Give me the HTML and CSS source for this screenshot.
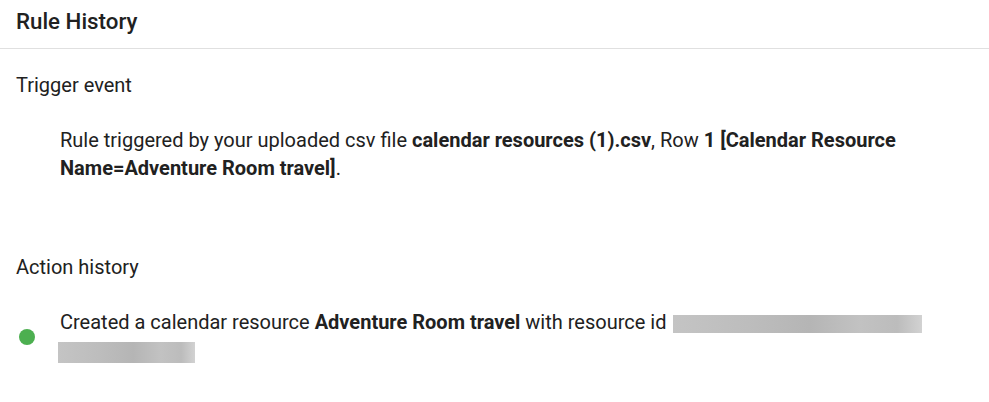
FILE: index.html
```html
<!DOCTYPE html>
<html>
<head>
<meta charset="utf-8">
<link rel="stylesheet" href="styles.css">
</head>
<body>
<div class="panel">
  <div class="header"><h1 class="title">Rule History</h1></div>
  <section class="section trigger">
    <div class="label">Trigger event</div>
    <p class="desc">Rule triggered by your uploaded csv file <b>calendar resources (1).csv</b>, Row <b>1 [Calendar Resource Name=Adventure Room travel]</b>.</p>
  </section>
  <section class="section action">
    <div class="label">Action history</div>
    <div class="item">
      <span class="dot"></span>
      <p class="item-text">Created a calendar resource <b>Adventure Room travel</b> with resource id <span class="redact redact-a"></span> <span class="redact redact-b"></span></p>
    </div>
  </section>
</div>
</body>
</html>
```
FILE: styles.css
```css
html, body { margin: 0; padding: 0; background: #fff; }
body { font-family: Roboto, "Noto Sans", Arial, sans-serif; color: #212121; }
.header {
  height: 48px;
  padding: 0 16px;
  display: flex;
  align-items: center;
  border-bottom: 1px solid #e0e0e0;
}
.title { margin: 0; font-size: 22.3px; font-weight: 500; line-height: 28px; margin-top: -6px; }
.section { padding: 0 16px; }
.label { font-size: 20px; line-height: 28px; }
.trigger .label { margin-top: 22px; }
.desc { margin: 27px 0 0 44px; font-size: 20px; line-height: 28px; }
.action .label { margin-top: 71px; }
.item { display: flex; align-items: center; margin-top: 27px; }
.dot { width: 16px; height: 16px; border-radius: 50%; background: #4caf50; margin-left: 3px; flex: none; }
.item-text { margin: 0 0 0 25px; font-size: 20px; line-height: 29px; }
.redact { display: inline-block; vertical-align: middle; background: linear-gradient(90deg, #c4c4c4, #bdbdbd 30%, #b5b5b5 55%, #c2c2c2 75%, #bcbcbc 90%, #d2d2d2); }
.redact-a { width: 249px; height: 18px; margin-left: 2px; }
.redact-b { width: 137px; height: 21px; margin-left: -2px; }
```
